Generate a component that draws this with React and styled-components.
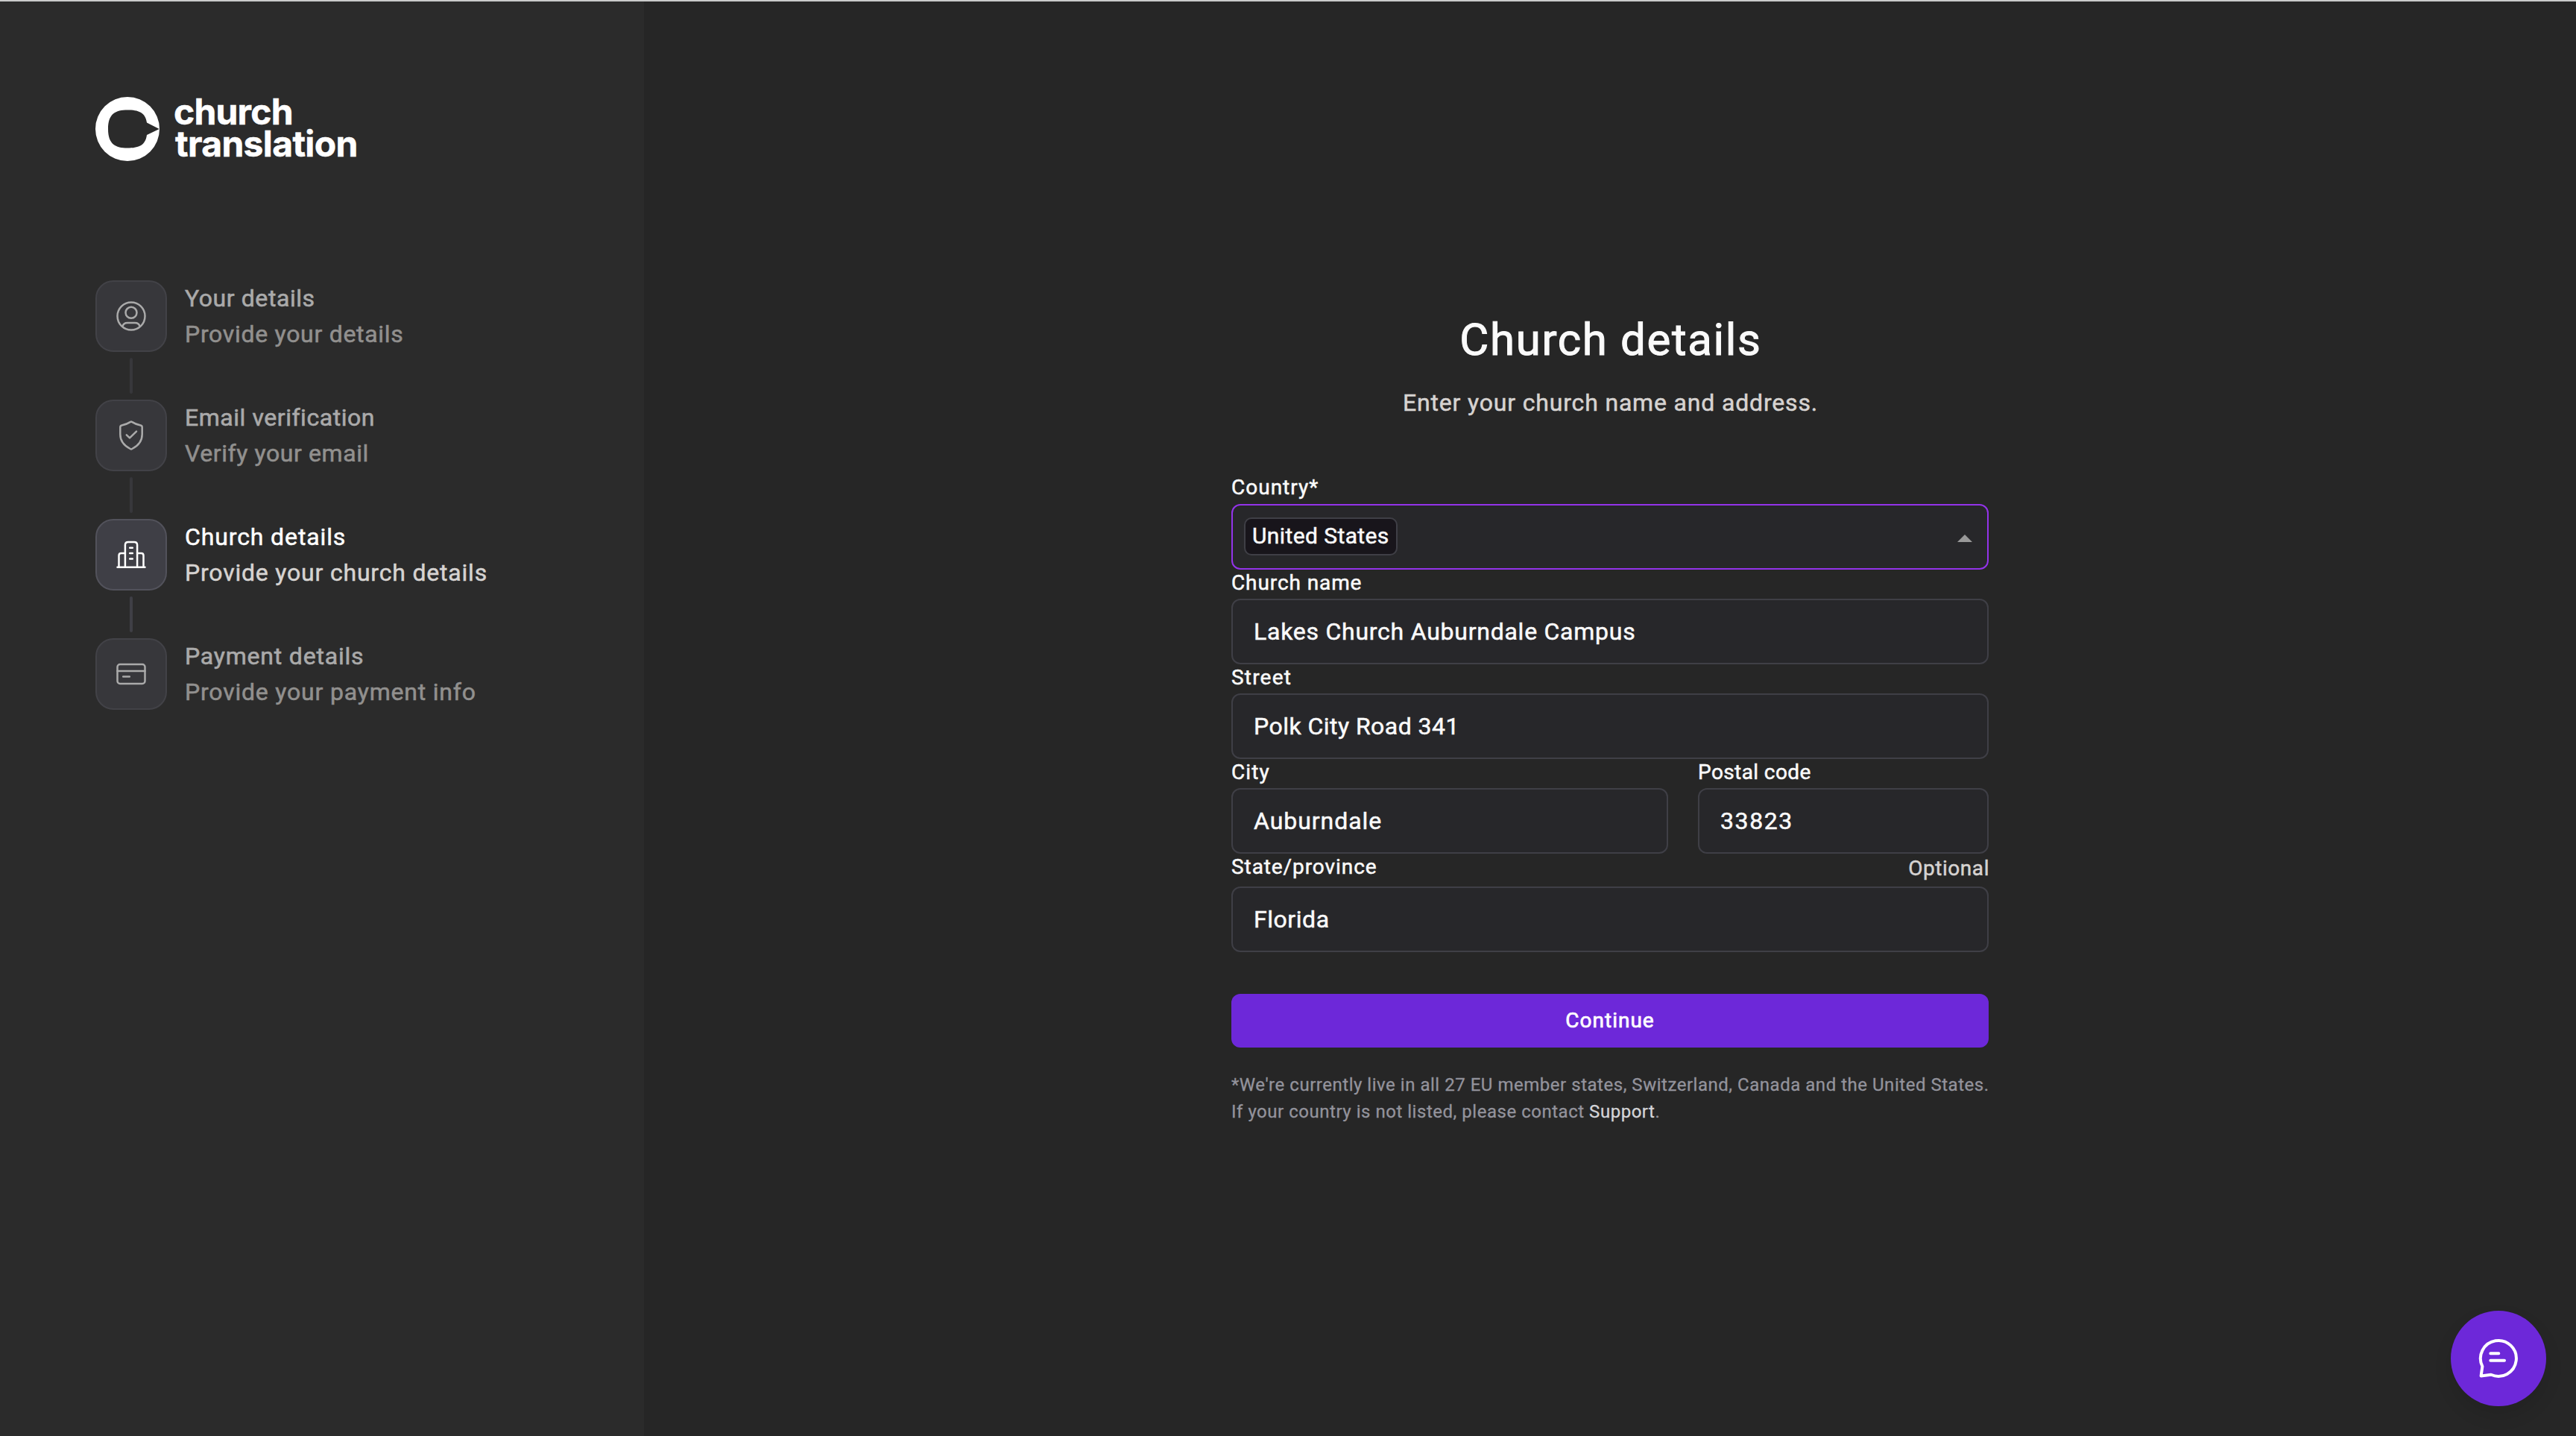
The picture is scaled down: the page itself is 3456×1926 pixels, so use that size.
import React from 'react'
import styled, { createGlobalStyle } from 'styled-components'

const GlobalStyle=createGlobalStyle`
*{
    box-sizing:border-box;
}

body{
    margin:0;
    background:#262626;
    color:#fafafa;
    font-family:Roboto, "Liberation Sans", sans-serif;
    font-size:32px;
    -webkit-text-stroke:0.5px currentColor;
}
`

const Page=styled.div`
display:flex;
height:1926px;
border-top:2px solid #cacbcb;
overflow:hidden;
`

const Sidebar=styled.aside`
width:864px;
flex-shrink:0;
padding:128px 128px 0;
background:#2b2b2b;
`

const Logo=styled.div`
display:flex;
align-items:center;
height:86px;
margin-bottom:160px;

svg{
    width:86px;
    height:86px;
}
`

const LogoText=styled.div`
margin:-4px 0 0 19px;
font-family:Inter, sans-serif;
font-size:48px;
font-weight:700;
line-height:43px;
letter-spacing:-0.8px;
color:#fff;

span{
    display:block;
}

span + span{
    padding-left:2px;
    letter-spacing:-0.65px;
}
`

const Step=styled.div`
display:flex;
gap:24px;
height:160px;
opacity:${({ $active }) => ($active ? 1 : 0.6)};
`

const StepMarker=styled.div`
display:flex;
flex-direction:column;
align-items:center;
gap:8px;
`

const StepIcon=styled.div`
display:flex;
align-items:center;
justify-content:center;
width:96px;
height:96px;
border:2px solid #52525b;
border-radius:24px;
background:#3f3f46;
color:#fff;

svg{
    width:48px;
    height:48px;
    fill:none;
    stroke:currentColor;
    stroke-width:2.5;
    stroke-linecap:round;
    stroke-linejoin:round;
}
`

const StepLine=styled.div`
width:4px;
height:48px;
border-radius:2px;
background:#3f3f46;
`

const StepText=styled.div`
line-height:48px;
white-space:nowrap;
`

const StepTitle=styled.div`
color:#fff;
letter-spacing:${({ $track }) => $track}px;
`

const StepDes=styled.div`
color:#d6d3d1;
letter-spacing:${({ $track }) => $track}px;
`

const Main=styled.main`
display:flex;
flex:1;
justify-content:center;
padding-top:418px;
`

const Form=styled.div`
width:1016px;
`

const Title=styled.h1`
margin:0 0 24px;
font-size:60px;
font-weight:400;
line-height:72px;
letter-spacing:1.65px;
text-indent:2px;
text-align:center;
-webkit-text-stroke-width:1px;
`

const Subtitle=styled.p`
margin:0 0 72px;
line-height:48px;
letter-spacing:0.83px;
text-indent:1px;
text-align:center;
color:#d6d3d1;
`

const FieldRow=styled.div`
display:grid;
grid-template-columns:586px 390px;
gap:40px;
`

const LabelRow=styled.div`
display:flex;
justify-content:space-between;
margin-bottom:${({ $gap }) => $gap || 4}px;
font-size:28px;
line-height:35px;
`

const Label=styled.label`
letter-spacing:${({ $track }) => $track}px;
`

const Optional=styled.span`
padding-top:2px;
margin:0 -1px -2px 0;
letter-spacing:0.55px;
color:#d6d3d1;
`

const Control=styled.div`
display:flex;
align-items:center;
height:88px;
padding:0 28px;
border:2px solid #3f3f46;
border-radius:12px;
background:#27272a;
letter-spacing:${({ $track }) => $track}px;
`

const Select=styled(Control)`
justify-content:space-between;
padding:0 20px 0 15px;
border-color:#9333ea;
`

const Chip=styled.span`
width:206px;
height:51px;
margin-top:-1px;
padding-left:9px;
border:2px solid #3f3f46;
border-radius:10px;
background:#18151b;
font-size:30px;
line-height:45px;
letter-spacing:0.4px;
white-space:nowrap;
`

const Arrow=styled.span`
margin-top:4px;
border:10px solid transparent;
border-top:0;
border-bottom-color:#999;
`

const Button=styled.button`
display:block;
width:100%;
height:72px;
margin:56px 0 32px;
padding:0 0 2px;
border:0;
border-radius:12px;
background:#6d28d9;
color:#fff;
font:400 28px Roboto, sans-serif;
letter-spacing:1px;
-webkit-text-stroke:0.7px currentColor;
`

const Note=styled.p`
margin:0;
font-size:24px;
line-height:36px;
letter-spacing:0.525px;
white-space:nowrap;
color:#93939c;
-webkit-text-stroke-width:0.3px;

a{
    color:#d4d4d8;
}
`

const ChatButton=styled.div`
position:fixed;
right:40px;
bottom:40px;
display:flex;
align-items:center;
justify-content:center;
width:128px;
height:128px;
border-radius:50%;
background:#6d28d9;
box-shadow:0 12px 24px rgba(0, 0, 0, 0.1);

svg{
    width:56px;
    height:56px;
    fill:none;
    stroke:#fff;
    stroke-width:4;
    stroke-linecap:round;
    stroke-linejoin:round;
}
`

const UserIcon=() => (
    <svg viewBox='0 0 48 48'>
        <circle cx='24' cy='24' r='18.5'/>
        <circle cx='24' cy='19.3' r='7.5'/>
        <path d='M12.4 37.8C13.2 34.6 15.8 33 19 33h10c3.2 0 5.8 1.6 6.6 4.8'/>
    </svg>
)

const ShieldIcon=() => (
    <svg viewBox='0 0 48 48'>
        <path d='M23 5.9q1-.8 2 0c3.4 2.3 7.4 3.7 11.7 4.6q2 .5 2 2.5v9.5c0 8.4-4.7 15-13.500 19.500q-1.200.8-2.400 0C14 37.500 9.300 30.900 9.300 22.500V13q0-2 2-2.500C15.600 9.600 19.600 8.200 23 5.900z'/>
        <path d='M17.800 23.400l4.200 4L31 18.700'/>
    </svg>
)

const BuildingIcon=() => (
    <svg viewBox='0 0 48 48'>
        <path d='M5.500 40.700h37M15.900 40.700V11q0-4 4-4h8.200q4 0 4 4v29.700'/>
        <path d='M7.500 40.700V25.100q0-3 3-3h5.400M40.500 40.700V25.100q0-3-3-3h-5.400'/>
        <path d='M22.200 14.700h3.600M22.200 22.100h3.600M22.200 29.500h3.600'/>
    </svg>
)

const CardIcon=() => (
    <svg viewBox='0 0 48 48'>
        <rect x='5.500' y='11' width='37' height='26' rx='3.500'/>
        <path d='M5.500 20h37M13.200 27.400h8.600'/>
    </svg>
)

function App() {

    const steps=[
        {
            id:1,
            icon:<UserIcon/>,
            title:'Your details',
            titleTrack:0.57,
            des:'Provide your details',
            desTrack:0.7
        },
        {
            id:2,
            icon:<ShieldIcon/>,
            title:'Email verification',
            titleTrack:0.54,
            des:'Verify your email',
            desTrack:0.58
        },
        {
            id:3,
            icon:<BuildingIcon/>,
            title:'Church details',
            titleTrack:0.88,
            des:'Provide your church details',
            desTrack:0.8,
            active:true
        },
        {
            id:4,
            icon:<CardIcon/>,
            title:'Payment details',
            titleTrack:0.8,
            des:'Provide your payment info',
            desTrack:0.8
        },
    ]

  return (
    <>
        <GlobalStyle/>
        <Page>
            <Sidebar>
                <Logo>
                    <svg viewBox='0 0 86 86'>
                        <path
                            fill='#fff'
                            fillRule='evenodd'
                            d='M43 0a43 43 0 1 1 0 86a43 43 0 1 1 0-86zM43 17.500c-16 0-26 5-26 25.500s10 25.500 26 25.500c14.500 0 24-3 26-17.500L85.700 43L69 34.500C67 20.500 57.500 17.500 43 17.500z'
                        />
                    </svg>
                    <LogoText>
                        <span>church</span>
                        <span>translation</span>
                    </LogoText>
                </Logo>
                {steps.map((item, i)=>
                    <Step key={item.id} $active={item.active}>
                        <StepMarker>
                            <StepIcon>{item.icon}</StepIcon>
                            {i < steps.length - 1 && <StepLine/>}
                        </StepMarker>
                        <StepText>
                            <StepTitle $track={item.titleTrack}>{item.title}</StepTitle>
                            <StepDes $track={item.desTrack}>{item.des}</StepDes>
                        </StepText>
                    </Step>
                )}
            </Sidebar>
            <Main>
                <Form>
                    <Title>Church details</Title>
                    <Subtitle>Enter your church name and address.</Subtitle>

                    <LabelRow $gap={5}><Label $track={1}>Country*</Label></LabelRow>
                    <Select>
                        <Chip>United States</Chip>
                        <Arrow/>
                    </Select>

                    <LabelRow><Label $track={0.9}>Church name</Label></LabelRow>
                    <Control $track={0.75}>Lakes Church Auburndale Campus</Control>

                    <LabelRow><Label $track={1.2}>Street</Label></LabelRow>
                    <Control $track={0.46}>Polk City Road 341</Control>

                    <FieldRow>
                        <div>
                            <LabelRow><Label $track={1.1}>City</Label></LabelRow>
                            <Control $track={0.95}>Auburndale</Control>
                        </div>
                        <div>
                            <LabelRow><Label $track={0.4}>Postal code</Label></LabelRow>
                            <Control $track={1.6}>33823</Control>
                        </div>
                    </FieldRow>

                    <LabelRow $gap={9}>
                        <Label $track={0.92}>State/province</Label>
                        <Optional>Optional</Optional>
                    </LabelRow>
                    <Control $track={0.55}>Florida</Control>

                    <Button>Continue</Button>
                    <Note>
                        *We're currently live in all 27 EU member states, Switzerland, Canada and the United States.<br/>
                        If your country is not listed, please contact <a>Support</a>.
                    </Note>
                </Form>
            </Main>
        </Page>
        <ChatButton>
            <svg viewBox='0 0 56 56'>
                <path d='M18 49.800A24 24 0 1 0 6.400 38.600L4.600 51.400z'/>
                <path d='M17.300 21.300h11M17.300 30.700H36'/>
            </svg>
        </ChatButton>
    </>
  )
}

export default App
